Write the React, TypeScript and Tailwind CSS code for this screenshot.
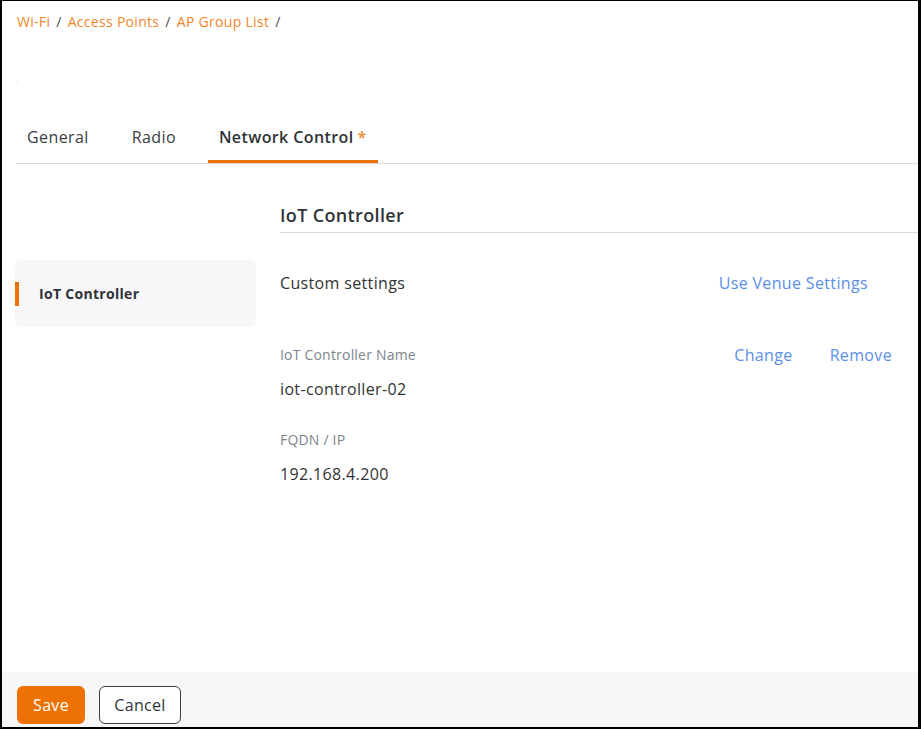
import React from 'react';

const crumbs = ['Wi-Fi', 'Access Points', 'AP Group List'];

function Tabs() {
  const tabs = [
    { label: 'General', active: false },
    { label: 'Radio', active: false },
    { label: 'Network Control', active: true },
  ];
  return (
    <div className="ml-[14px] flex gap-[21px] border-b border-[#d9d9d9] tracking-[0.4px]">
      {tabs.map((t) => (
        <div
          key={t.label}
          className={
            t.active
              ? 'px-[11px] pb-[11px] border-b-[3px] border-[#ee7203] text-base leading-6 font-semibold text-[#2f3338]'
              : 'px-[11px] pb-[11px] border-b-[3px] border-transparent text-base leading-6 text-[#3a3d42]'
          }
        >
          {t.label}
          {t.active && <span className="text-[#f08a2b] ml-1">*</span>}
        </div>
      ))}
    </div>
  );
}

export default function App() {
  return (
    <div
      className="w-[921px] h-[729px] flex flex-col bg-white border-black border-t border-l-2 border-r-[3px] border-b-2 text-[#333]"
      style={{ fontFamily: '"Open Sans", "Noto Sans", sans-serif' }}
    >
      {/* Breadcrumb */}
      <div className="px-[15px] pt-[11px] flex items-center gap-[6px] text-sm leading-5 tracking-[0.3px]">
        {crumbs.map((c) => (
          <React.Fragment key={c}>
            <span className="text-[#f0862a]">{c}</span>
            <span className="text-[#4a4d52]">/</span>
          </React.Fragment>
        ))}
      </div>
      <div className="ml-[15px] mt-[49px] w-px h-px bg-[#f6c89a]" />

      <div className="mt-[43px]">
        <Tabs />
      </div>

      <div className="flex-1 flex">
        {/* Side menu */}
        <div className="ml-[13px] w-[241px] pt-[96px]">
          <div className="h-[67px] bg-[#f7f7f9] rounded-md flex items-center">
            <div className="w-[4px] h-6 bg-[#ee7203]" />
            <span className="ml-[20px] text-sm font-bold text-[#2f3338] tracking-[0.3px]">IoT Controller</span>
          </div>
        </div>

        {/* Content */}
        <div className="flex-1 ml-[24px] pt-[37px] tracking-[0.35px]">
          <div className="pb-[3px] border-b border-[#d9d9d9]">
            <h2 className="text-lg leading-7 font-semibold text-[#2f3338]">IoT Controller</h2>
          </div>

          <div className="mt-[38px] flex items-center justify-between pr-[50px] text-base leading-6">
            <span className="text-[#333]">Custom settings</span>
            <span className="text-[#5b8ee8]">Use Venue Settings</span>
          </div>

          <div className="mt-[48px] flex items-center justify-between pr-[26px]">
            <span className="text-sm leading-5 text-[#7d848c] tracking-[0.2px]">IoT Controller Name</span>
            <div className="flex gap-[37px] text-base leading-6 text-[#5b8ee8]">
              <span>Change</span>
              <span>Remove</span>
            </div>
          </div>
          <div className="mt-[10px] text-base leading-6">iot-controller-02</div>

          <div className="mt-[29px] text-sm leading-5 text-[#7d848c] tracking-[0.2px]">FQDN / IP</div>
          <div className="mt-[12px] text-base leading-6">192.168.4.200</div>
        </div>
      </div>

      {/* Footer */}
      <div className="h-[55px] bg-[#f7f7f9] px-[15px] pt-[14px] flex gap-[14px] items-start">
        <button className="w-[68px] h-[38px] rounded-md bg-[#ee7203] text-white text-base tracking-[0.3px]">Save</button>
        <button className="w-[82px] h-[38px] rounded-md border border-[#3a3d42] bg-white text-base text-[#2f3338] tracking-[0.3px]">
          Cancel
        </button>
      </div>
    </div>
  );
}
